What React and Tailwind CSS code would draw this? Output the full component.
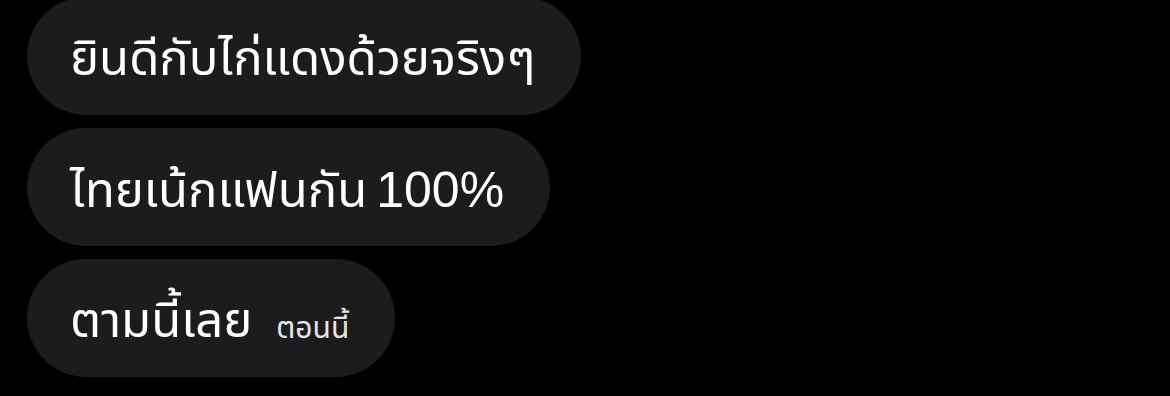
import React from 'react'

const messages = [
  { text: 'ยินดีกับไก่แดงด้วยจริงๆ' },
  { text: 'ไทยเน้กแฟนกัน', num: '100%' },
  { text: 'ตามนี้เลย', time: 'ตอนนี้' },
]

export default function App() {
  return (
    <div
      className="w-[1170px] h-[396px] bg-black overflow-hidden"
      style={{ fontFamily: '"Noto Sans Thai", "Noto Sans", "DejaVu Sans", sans-serif' }}
    >
      <div className="flex flex-col items-start gap-[13px] pl-[27px] -mt-[3px]">
        {messages.map((m, i) => (
          <div
            key={i}
            className="h-[118px] flex items-center rounded-full bg-[#1c1c1e] pt-[8px] pl-[43px] pr-[46px] text-white"
          >
            <span className="text-[49px] leading-none whitespace-pre">
              {m.text}
              {m.num && (
                <span className="ml-[9px] text-[50px] font-['Liberation_Sans',sans-serif]">{m.num}</span>
              )}
            </span>
            {m.time && (
              <span className="ml-[24px] mt-[14px] text-[30px] leading-none text-[#e5e5e7]">{m.time}</span>
            )}
          </div>
        ))}
      </div>
    </div>
  )
}
